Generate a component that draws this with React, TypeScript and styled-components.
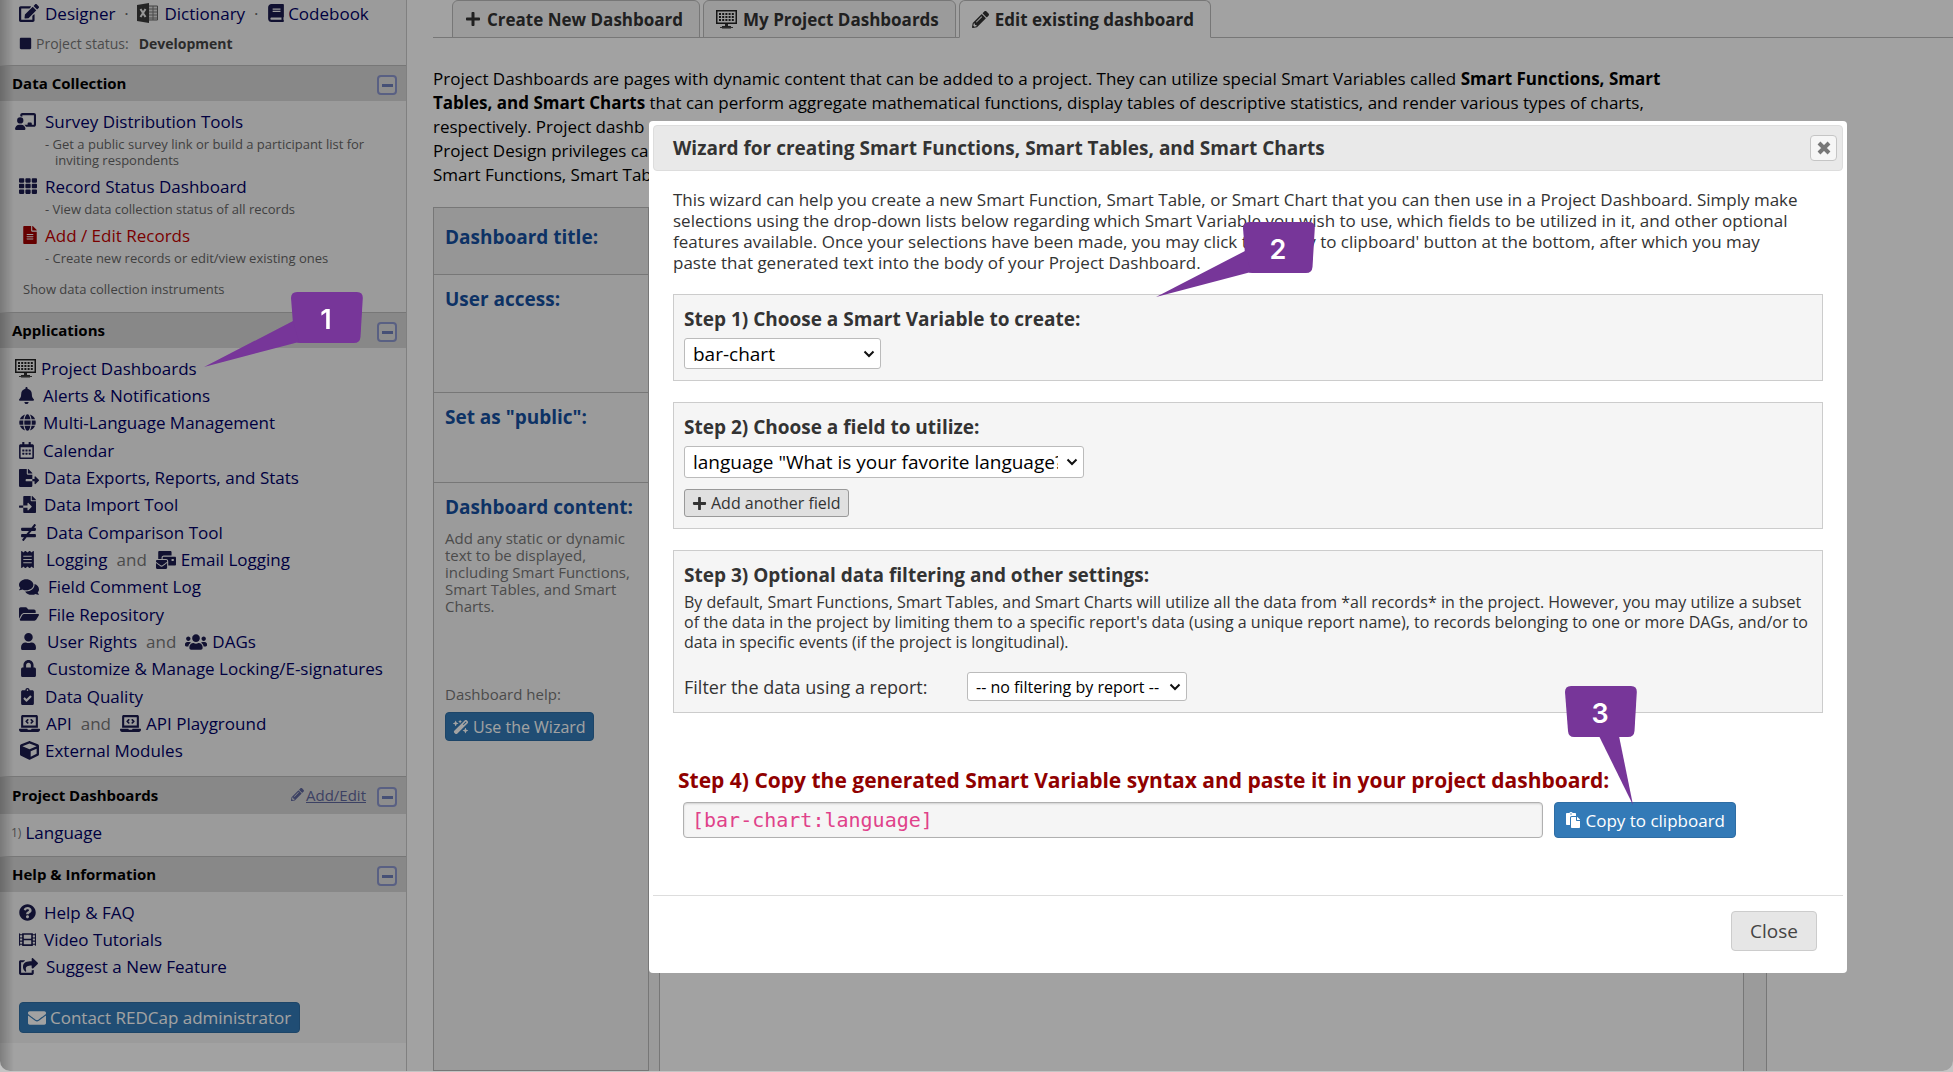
import React from "react";
import styled, { createGlobalStyle } from "styled-components";
import {
  FaEdit, FaBook, FaSquare, FaTh, FaBell, FaGlobe, FaRegCalendarAlt, FaFileExport, FaFileImport,
  FaNotEqual, FaReceipt, FaMailBulk, FaComments, FaFolderOpen, FaUser, FaUsers, FaLock,
  FaClipboardCheck, FaLaptopCode, FaCube, FaPencilAlt, FaQuestionCircle, FaFilm, FaShareSquare,
  FaEnvelope, FaPlus, FaPaste, FaFileAlt,
} from "react-icons/fa";
import { FaChalkboardUser, FaWandMagicSparkles } from "react-icons/fa6";

const Global = createGlobalStyle`
  * { box-sizing: border-box; }
  html { background: #c4c4c4; }
  body { margin: 0; overflow: hidden; font-family: "Open Sans", "Noto Sans", sans-serif; color: #000; }
  button, select, input { font-family: inherit; }
`;

const Page = styled.div`
  display: flex;
  height: calc(100vh - 1px);
  overflow: hidden;
  border-radius: 0 0 10px 10px;
  background: #fff;
`;

/* ---------- sidebar ---------- */

const Sidebar = styled.aside`
  flex: none;
  width: 407px;
  border-right: 1px solid #cacaca;
  background: linear-gradient(to right, rgba(0, 0, 0, 0.22), rgba(0, 0, 0, 0) 14px);
`;
const SideInner = styled.div`
  background: rgba(0, 0, 0, 0.04);
  padding-bottom: 10px;
`;
const TopLinks = styled.div`
  display: flex;
  align-items: center;
  height: 28px;
  padding: 0 0 2px 19px;
  font-size: 17px;
  color: #666;
`;
const StatusLine = styled.div`
  display: flex;
  align-items: center;
  gap: 4px;
  height: 37px;
  padding: 0 0 6px 19px;
  font-size: 14px;
  color: #777;
  svg { color: #1b1b4d; }
  b { margin-left: 6px; color: #444; }
`;
const Dot = styled.span`
  width: 22px;
  text-align: center;
`;
const SideLink = styled.a<{ $red?: boolean }>`
  display: inline-flex;
  align-items: center;
  color: ${(p) => (p.$red ? "#c00000" : "#000066")};
  text-decoration: none;
  white-space: nowrap;
  svg { color: ${(p) => (p.$red ? "#a00000" : "#1b1b4d")}; }
`;
const IconSlot = styled.span<{ $w: number; $pad?: number }>`
  display: inline-flex;
  align-items: center;
  flex: none;
  width: ${(p) => p.$w}px;
  padding-left: ${(p) => p.$pad ?? 0}px;
`;
const SectionHead = styled.h2<{ $h?: number }>`
  display: flex;
  align-items: center;
  gap: 11px;
  height: ${(p) => p.$h ?? 36}px;
  margin: 0;
  padding: 0 9px 2px 12px;
  border-top: 1px solid #bbb;
  background: rgba(0, 0, 0, 0.12);
  font-size: 15px;
  font-weight: 700;
`;
const HeadTitle = styled.span`
  flex: 1;
`;
const AddEdit = styled.a`
  display: flex;
  align-items: center;
  gap: 2px;
  color: #5f679c;
  font-size: 15px;
  font-weight: 400;
`;
const Collapse = styled.button`
  display: flex;
  align-items: center;
  justify-content: center;
  width: 20px;
  height: 20px;
  margin-top: 5px;
  padding: 0;
  border: 2px solid #8d97cf;
  border-radius: 4px;
  background: #dedede;
  &::before {
    content: "";
    width: 11px;
    height: 3px;
    background: #6f7fba;
  }
`;
const Collection = styled.div`
  padding: 7px 10px 0 15px;
`;
const BigLink = styled.div`
  display: flex;
  align-items: center;
  height: 26px;
  font-size: 17px;
`;
const Hint = styled.p`
  margin: 0;
  padding: 2px 0 5px 40px;
  text-indent: -10px;
  color: #666;
  font-size: 13px;
  line-height: 16px;
`;
const ShowMore = styled.a`
  display: block;
  padding: 9px 0 14px 8px;
  color: #666;
  font-size: 13px;
  line-height: 18px;
  text-decoration: none;
`;
const AppList = styled.ul`
  margin: 0;
  padding: 6px 0 12px;
  list-style: none;
`;
const AppRow = styled.li`
  display: flex;
  align-items: center;
  height: 27px;
  padding-left: 15px;
  font-size: 17px;
  &:nth-child(3n + 1) { height: 28px; }
`;
const And = styled.span`
  margin: 0 9px;
  color: #777;
`;
const DashRow = styled.div`
  display: flex;
  align-items: center;
  gap: 4px;
  height: 42px;
  padding: 0 0 6px 11px;
  font-size: 17px;
  small { color: #777; font-size: 12px; }
`;
const BlueButton = styled.button<{ $size: number; $h: number; $px: number }>`
  display: inline-flex;
  align-items: center;
  justify-content: center;
  gap: 4px;
  height: ${(p) => p.$h}px;
  padding: 0 ${(p) => p.$px}px;
  border: 1px solid #2e6da4;
  border-radius: 4px;
  background: #337ab7;
  color: #fff;
  font-size: ${(p) => p.$size}px;
  white-space: nowrap;
`;
const ContactWrap = styled.div`
  padding: 10px 0 0 19px;
`;

/* ---------- main page ---------- */

const Main = styled.main`
  display: flex;
  flex-direction: column;
  flex: 1;
  min-width: 0;
  padding-left: 26px;
`;
const Tabs = styled.nav`
  display: flex;
  gap: 3px;
  height: 38px;
  padding-left: 19px;
  border-bottom: 1px solid #bbb;
`;
const Tab = styled.a<{ $active?: boolean }>`
  display: flex;
  align-items: center;
  gap: 6px;
  height: 38px;
  padding: 0 16px 0 12px;
  border: 1px solid #bbb;
  border-bottom-color: ${(p) => (p.$active ? "#fff" : "#bbb")};
  border-radius: 6px 6px 0 0;
  background: ${(p) => (p.$active ? "#fff" : "#f5f5f5")};
  color: #333;
  font-size: 17px;
  font-weight: 700;
  text-decoration: none;
  white-space: nowrap;
`;
const Intro = styled.p`
  max-width: 1270px;
  margin: 0;
  padding: 29px 0 20px;
  font-size: 17px;
  line-height: 24px;
`;
const FormTable = styled.div`
  display: grid;
  grid-template-columns: 215px 1fr;
  grid-template-rows: 67px 118px 90px 1fr;
  flex: 1;
  width: 1334px;
  border: 1px solid #bbb;
  border-bottom: 0;
  background: #f5f5f5;
`;
const LabelCell = styled.div<{ $dark?: boolean }>`
  padding: ${(p) => (p.$dark ? "17px" : "12px")} 10px 0 11px;
  border-right: 1px solid #bbb;
  border-bottom: 1px solid #bbb;
  background: ${(p) => (p.$dark ? "#ededed" : "transparent")};
`;
const FieldCell = styled.div<{ $dark?: boolean }>`
  border-bottom: 1px solid #bbb;
  background: ${(p) => (p.$dark ? "#ededed" : "transparent")};
`;
const EditorCell = styled.div`
  padding: 0 22px 0 10px;
`;
const Editor = styled.div`
  height: 100%;
  border: 1px solid #bbb;
  border-bottom: 0;
  background: #fff;
`;
const FieldLabel = styled.div`
  color: #1550a0;
  font-size: 19px;
  font-weight: 700;
  line-height: 24px;
  white-space: nowrap;
`;
const FieldHelp = styled.p`
  margin: 11px 0 0;
  color: #777;
  font-size: 15px;
  line-height: 17px;
`;
const HelpLabel = styled.p`
  margin: 69px 0 8px;
  color: #777;
  font-size: 15px;
  line-height: 20px;
`;

/* ---------- dialog ---------- */

const Overlay = styled.div`
  position: fixed;
  inset: 0 0 1px;
  display: flex;
  align-items: flex-start;
  padding: 121px 106px 0 649px;
  border-radius: 0 0 10px 10px;
  background: rgba(0, 0, 0, 0.365);
`;
const Dialog = styled.section`
  flex: 1;
  padding: 4px;
  border-radius: 4px;
  background: #fff;
  color: #333;
`;
const TitleBar = styled.header`
  display: flex;
  align-items: center;
  justify-content: space-between;
  height: 46px;
  padding: 0 5px 0 19px;
  border: 1px solid #ddd;
  border-radius: 4px;
  background: #e9e9e9;
`;
const Title = styled.h1`
  margin: 0;
  font-size: 19px;
  font-weight: 700;
`;
const CloseX = styled.button`
  display: flex;
  align-items: center;
  justify-content: center;
  width: 27px;
  height: 26px;
  padding: 0;
  border: 1px solid #c5c5c5;
  border-radius: 4px;
  background: #f6f6f6;
`;
const Body = styled.div`
  display: flex;
  flex-direction: column;
  gap: 21px;
  padding: 18px 20px 0;
`;
const Lead = styled.p`
  margin: 0;
  font-size: 17px;
  line-height: 21px;
`;
const Step = styled.section`
  padding: 12px 10px 11px;
  border: 1px solid #ccc;
  background: #f5f5f5;
`;
const StepTitle = styled.label`
  display: block;
  margin: 0;
  font-size: 19px;
  font-weight: 700;
  line-height: 24px;
`;
const StepText = styled.p`
  margin: 5px 0 20px;
  font-size: 16px;
  line-height: 20px;
`;
const SelectBox = styled.div<{ $w: number; $h: number }>`
  display: grid;
  grid-template-columns: 1fr 18px;
  align-items: center;
  width: ${(p) => p.$w}px;
  height: ${(p) => p.$h}px;
  margin-top: 7px;
  svg { grid-area: 1 / 2; pointer-events: none; z-index: 1; }
`;
const Select = styled.select<{ $size: number }>`
  grid-area: 1 / 1 / 2 / 3;
  width: 100%;
  height: 100%;
  padding: 0 25px 0 8px;
  border: 1px solid #bbb;
  border-radius: 3px;
  background: #fff;
  color: #000;
  font-size: ${(p) => p.$size}px;
  appearance: none;
`;
const GreyButton = styled.button`
  display: flex;
  align-items: center;
  gap: 4px;
  height: 28px;
  margin-top: 11px;
  padding: 0 7px;
  border: 1px solid #999;
  border-radius: 3px;
  background: #e0e0e0;
  color: #333;
  font-size: 16px;
`;
const FilterRow = styled.div`
  display: flex;
  align-items: center;
  label { width: 283px; font-size: 18px; }
  > div { margin-top: 0; }
`;
const FinalStep = styled.section`
  padding: 31px 0 57px 5px;
`;
const FinalTitle = styled.label`
  display: block;
  color: #900000;
  font-size: 21px;
  font-weight: 700;
  line-height: 30px;
`;
const CopyRow = styled.div`
  display: flex;
  gap: 11px;
  margin-top: 7px;
  padding: 0 87px 0 5px;
`;
const Syntax = styled.input`
  flex: 1;
  min-width: 0;
  height: 36px;
  padding: 0 8px;
  border: 1px solid #b0b0b0;
  border-radius: 4px;
  background: #f5f5f5;
  box-shadow: inset 0 1px 2px rgba(0, 0, 0, 0.15);
  color: #e0428a;
  font-family: "DejaVu Sans Mono", monospace;
  font-size: 20px;
`;
const Footer = styled.footer`
  display: flex;
  justify-content: flex-end;
  padding: 15px 26px 18px;
  border-top: 1px solid #ddd;
`;
const CloseButton = styled.button`
  width: 86px;
  height: 40px;
  border: 1px solid #ccc;
  border-radius: 4px;
  background: #e6e6e6;
  color: #444;
  font-size: 19px;
`;

/* ---------- numbered callouts pinned over the page ---------- */

const Pin = styled.div<{ $x: number; $y: number }>`
  position: fixed;
  left: ${(p) => p.$x}px;
  top: ${(p) => p.$y}px;
  width: 72px;
  height: 51px;
  display: grid;
  place-items: center;
  padding: 4px 2px 0 0;
  color: #fff;
  font: 600 27px "Inter", sans-serif;
  svg { position: absolute; left: 0; top: 0; overflow: visible; }
  span { position: relative; }
`;

const Callout = ({ n, x, y, tail }: { n: number; x: number; y: number; tail: string }) => (
  <Pin $x={x} $y={y}>
    <svg width="72" height="51" fill="#773699">
      <path d="M6 0H66Q72 0 71.800 6L69.500 45Q69 51 63 51H9Q3.500 51 3 45L0 6Q0 0 6 0Z" />
      <polygon points={tail} />
    </svg>
    <span>{n}</span>
  </Pin>
);

const Monitor = () => (
  <svg width="21" height="19" viewBox="0 0 21 19">
    <path d="M0 0H21V14H0ZM1.500 1.500V12.500H19.500V1.500Z" fill="#222" fillRule="evenodd" />
    <path d="M3 4H18M3 7H18M3 10H18" stroke="#222" strokeWidth="2" strokeDasharray="2 1.200" />
    <path d="M9 14H12V16H15V18.500H6V16H9Z" fill="#333" />
    <path d="M4 17.500H17" stroke="#444" />
  </svg>
);

const Excel = () => (
  <svg width="21" height="20" viewBox="0 0 21 20">
    <path d="M11 3H20.500V17H11Z" fill="#ddd" stroke="#666" />
    <path d="M12 6H20M12 9H20M12 12H20M12 15H20M16 3V17" stroke="#777" />
    <path d="M0 2L12 0V20L0 18Z" fill="#3b3b3b" />
    <path d="M3.500 6L8.500 14M8.500 6L3.500 14" stroke="#eee" strokeWidth="2" />
  </svg>
);

const Chevron = () => (
  <svg width="12" height="8" viewBox="0 0 12 8">
    <path d="M1.500 1.500L6 6L10.500 1.500" fill="none" stroke="#111" strokeWidth="2" />
  </svg>
);

type Entry = { icon: React.ReactNode; text: string; pad: number; w: number };
const e = (icon: React.ReactNode, text: string, pad: number, w: number): Entry => ({ icon, text, pad, w });

const apps: Entry[][] = [
  [e(<Monitor />, "Project Dashboards", 0, 26)],
  [e(<FaBell size={17} />, "Alerts & Notifications", 3, 28)],
  [e(<FaGlobe size={17} />, "Multi-Language Management", 4, 28)],
  [e(<FaRegCalendarAlt size={17} />, "Calendar", 3, 28)],
  [e(<FaFileExport size={20} />, "Data Exports, Reports, and Stats", 4, 29)],
  [e(<FaFileImport size={17} />, "Data Import Tool", 4, 29)],
  [e(<FaNotEqual size={17} />, "Data Comparison Tool", 5, 31)],
  [e(<FaReceipt size={17} />, "Logging", 4, 31), e(<FaMailBulk size={20} />, "Email Logging", 0, 25)],
  [e(<FaComments size={20} />, "Field Comment Log", 4, 33)],
  [e(<FaFolderOpen size={20} />, "File Repository", 4, 33)],
  [e(<FaUser size={17} />, "User Rights", 5, 32), e(<FaUsers size={22} />, "DAGs", 0, 27)],
  [e(<FaLock size={17} />, "Customize & Manage Locking/E-signatures", 5, 32)],
  [e(<FaClipboardCheck size={17} />, "Data Quality", 4, 30)],
  [e(<FaLaptopCode size={21} />, "API", 4, 31), e(<FaLaptopCode size={21} />, "API Playground", 0, 26)],
  [e(<FaCube size={19} />, "External Modules", 5, 30)],
];
const help: Entry[][] = [
  [e(<FaQuestionCircle size={17} />, "Help & FAQ", 4, 29)],
  [e(<FaFilm size={17} />, "Video Tutorials", 4, 29)],
  [e(<FaShareSquare size={19} />, "Suggest a New Feature", 4, 31)],
];

const Links = ({ rows }: { rows: Entry[][] }) => (
  <AppList>
    {rows.map((row) => (
      <AppRow key={row[0].text}>
        {row.map((it, i) => (
          <React.Fragment key={it.text}>
            {i > 0 && <And>and</And>}
            <SideLink href="#">
              <IconSlot $w={it.w} $pad={it.pad}>{it.icon}</IconSlot>
              {it.text}
            </SideLink>
          </React.Fragment>
        ))}
      </AppRow>
    ))}
  </AppList>
);

export default function App() {
  return (
    <>
      <Global />
      <Page>
        <Sidebar>
          <SideInner>
            <TopLinks>
              <SideLink href="#"><IconSlot $w={26}><FaEdit size={20} /></IconSlot>Designer</SideLink>
              <Dot>·</Dot>
              <SideLink href="#"><IconSlot $w={27}><Excel /></IconSlot>Dictionary</SideLink>
              <Dot>·</Dot>
              <SideLink href="#"><IconSlot $w={21}><FaBook size={18} /></IconSlot>Codebook</SideLink>
            </TopLinks>
            <StatusLine><FaSquare size={13} />Project status: <b>Development</b></StatusLine>

            <SectionHead><HeadTitle>Data Collection</HeadTitle><Collapse aria-label="Collapse" /></SectionHead>
            <Collection>
              <BigLink><SideLink href="#"><IconSlot $w={30}><FaChalkboardUser size={21} /></IconSlot>Survey Distribution Tools</SideLink></BigLink>
              <Hint>- Get a public survey link or build a participant list for inviting respondents</Hint>
              <BigLink><SideLink href="#"><IconSlot $w={30} $pad={4}><FaTh size={18} /></IconSlot>Record Status Dashboard</SideLink></BigLink>
              <Hint>- View data collection status of all records</Hint>
              <BigLink><SideLink href="#" $red><IconSlot $w={30} $pad={6}><FaFileAlt size={18} /></IconSlot>Add / Edit Records</SideLink></BigLink>
              <Hint>- Create new records or edit/view existing ones</Hint>
              <ShowMore href="#">Show data collection instruments</ShowMore>
            </Collection>

            <SectionHead><HeadTitle>Applications</HeadTitle><Collapse aria-label="Collapse" /></SectionHead>
            <Links rows={apps} />

            <SectionHead $h={38}>
              <HeadTitle>Project Dashboards</HeadTitle>
              <AddEdit href="#"><FaPencilAlt size={13} />Add/Edit</AddEdit>
              <Collapse aria-label="Collapse" />
            </SectionHead>
            <DashRow><small>1)</small><SideLink href="#">Language</SideLink></DashRow>

            <SectionHead><HeadTitle>Help &amp; Information</HeadTitle><Collapse aria-label="Collapse" /></SectionHead>
            <Links rows={help} />
            <ContactWrap>
              <BlueButton $size={17} $h={31} $px={8}><FaEnvelope size={18} />Contact REDCap administrator</BlueButton>
            </ContactWrap>
          </SideInner>
        </Sidebar>

        <Main>
          <Tabs>
            <Tab href="#"><FaPlus size={16} />Create New Dashboard</Tab>
            <Tab href="#"><Monitor />My Project Dashboards</Tab>
            <Tab href="#" $active><FaPencilAlt size={17} />Edit existing dashboard</Tab>
          </Tabs>
          <Intro>
            Project Dashboards are pages with dynamic content that can be added to a project. They can utilize special
            Smart Variables called <b>Smart Functions, Smart<br />Tables, and Smart Charts</b> that can perform aggregate
            mathematical functions, display tables of descriptive statistics, and render various types of charts,
            <br />respectively. Project dashb
            <br />Project Design privileges ca
            <br />Smart Functions, Smart Tab
          </Intro>
          <FormTable>
            <LabelCell $dark><FieldLabel>Dashboard title:</FieldLabel></LabelCell>
            <FieldCell $dark />
            <LabelCell><FieldLabel>User access:</FieldLabel></LabelCell>
            <FieldCell />
            <LabelCell><FieldLabel>Set as "public":</FieldLabel></LabelCell>
            <FieldCell />
            <LabelCell>
              <FieldLabel>Dashboard content:</FieldLabel>
              <FieldHelp>Add any static or dynamic text to be displayed, including Smart Functions, Smart Tables, and Smart Charts.</FieldHelp>
              <HelpLabel>Dashboard help:</HelpLabel>
              <BlueButton $size={16} $h={29} $px={7}><FaWandMagicSparkles size={16} />Use the Wizard</BlueButton>
            </LabelCell>
            <EditorCell><Editor /></EditorCell>
          </FormTable>
        </Main>
      </Page>

      <Overlay>
        <Dialog role="dialog" aria-labelledby="wizard-title">
          <TitleBar>
            <Title id="wizard-title">Wizard for creating Smart Functions, Smart Tables, and Smart Charts</Title>
            <CloseX aria-label="Close dialog">
              <svg width="14" height="14" viewBox="0 0 14 14"><path d="M2 2L12 12M12 2L2 12" stroke="#777" strokeWidth="4" /></svg>
            </CloseX>
          </TitleBar>
          <Body>
            <Lead>
              This wizard can help you create a new Smart Function, Smart Table, or Smart Chart that you can then use in a
              Project Dashboard. Simply make<br />selections using the drop-down lists below regarding which Smart Variable
              you wish to use, which fields to be utilized in it, and other optional<br />features available. Once your
              selections have been made, you may click the 'Copy to clipboard' button at the bottom, after which you
              may<br />paste that generated text into the body of your Project Dashboard.
            </Lead>
            <Step>
              <StepTitle htmlFor="variable">Step 1) Choose a Smart Variable to create:</StepTitle>
              <SelectBox $w={197} $h={31}>
                <Select id="variable" $size={19}><option>bar-chart</option></Select>
                <Chevron />
              </SelectBox>
            </Step>
            <Step>
              <StepTitle htmlFor="field">Step 2) Choose a field to utilize:</StepTitle>
              <SelectBox $w={400} $h={32}>
                <Select id="field" $size={19}><option>language "What is your favorite language?"</option></Select>
                <Chevron />
              </SelectBox>
              <GreyButton><FaPlus size={15} />Add another field</GreyButton>
            </Step>
            <Step>
              <StepTitle as="h3">Step 3) Optional data filtering and other settings:</StepTitle>
              <StepText>
                By default, Smart Functions, Smart Tables, and Smart Charts will utilize all the data from *all records* in
                the project. However, you may utilize a subset of the data in the project by limiting them to a specific
                report's data (using a unique report name), to records belonging to one or more DAGs, and/or to data in
                specific events (if the project is longitudinal).
              </StepText>
              <FilterRow>
                <label htmlFor="report">Filter the data using a report:</label>
                <SelectBox $w={220} $h={29}>
                  <Select id="report" $size={16}><option>-- no filtering by report --</option></Select>
                  <Chevron />
                </SelectBox>
              </FilterRow>
            </Step>
            <FinalStep>
              <FinalTitle htmlFor="syntax">Step 4) Copy the generated Smart Variable syntax and paste it in your project dashboard:</FinalTitle>
              <CopyRow>
                <Syntax id="syntax" readOnly value="[bar-chart:language]" />
                <BlueButton $size={17} $h={36} $px={10}><FaPaste size={16} />Copy to clipboard</BlueButton>
              </CopyRow>
            </FinalStep>
          </Body>
          <Footer><CloseButton>Close</CloseButton></Footer>
        </Dialog>
      </Overlay>

      <Callout n={1} x={291} y={292} tail="2,29 -87,75 8,50" />
      <Callout n={2} x={1243} y={222} tail="2,29 -87,75 8,50" />
      <Callout n={3} x={1565} y={686} tail="34,50 54,50 68,119" />
    </>
  );
}
